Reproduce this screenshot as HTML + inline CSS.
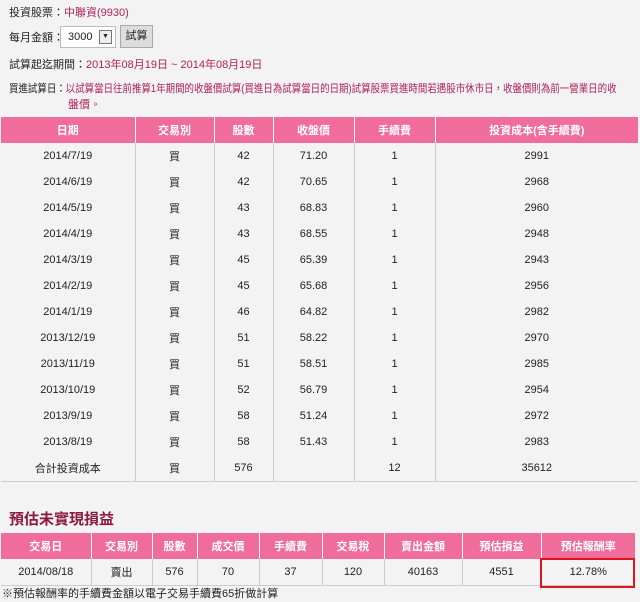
<!DOCTYPE html>
<html><head><meta charset="utf-8"><style>
body{margin:0;width:640px;height:602px;background:#f3f3f3;font-family:"Liberation Sans","Noto Sans CJK TC",sans-serif;font-size:11px;color:#222;position:relative;overflow:hidden}
.l{position:absolute;left:9px;white-space:nowrap}
.r{color:#b0215a}
table{position:absolute;border-collapse:collapse;table-layout:fixed}
td,th{text-align:center;padding:0;border-left:1px solid #ccc;font-size:11px}
th{background:#f06c9a;color:#fff;border-left:1px solid #fff;font-weight:bold}
td:first-child,th:first-child{border-left:none}
#t1{left:1px;top:117px;width:637px}
#t1 th{height:26px}
#t1 td{height:26px}
#t1 tr:last-child td{border-bottom:1px solid #ccc}
#t2{left:1px;top:533px;width:634px}
#t2 th{height:26px}
#t2 td{height:26px;border-bottom:1px solid #ccc}
</style></head><body>
<div class="l" style="top:4px">投資股票：<span class="r">中聯資(9930)</span></div>
<div class="l" style="top:29px">每月金額：</div>
<div style="position:absolute;left:60px;top:26px;width:54px;height:20px;background:#fff;border:1px solid #bbb"><span style="position:absolute;left:7px;top:4px">3000</span><span style="position:absolute;left:38px;top:3px;width:11px;height:12px;border:1px solid #777;background:#eee;font-size:7px;line-height:12px;text-align:center">▼</span></div>
<div style="position:absolute;left:120px;top:25px;width:31px;height:21px;background:#ddd;border:1px solid #aaa;text-align:center;line-height:21px">試算</div>
<div class="l" style="top:56px">試算起迄期間：<span class="r">2013年08月19日 ~ 2014年08月19日</span></div>
<div class="l" style="top:80px;transform:scaleX(0.86);transform-origin:0 0">買進試算日：<span class="r">以試算當日往前推算1年期間的收盤價試算(買進日為試算當日的日期)試算股票買進時間若遇股市休市日，收盤價則為前一營業日的收</span></div>
<div class="l r" style="top:96px;left:68px">盤價。</div>
<table id="t1"><colgroup><col style="width:134px"><col style="width:79px"><col style="width:59px"><col style="width:81px"><col style="width:81px"><col></colgroup>
<tr><th>日期</th><th>交易別</th><th>股數</th><th>收盤價</th><th>手續費</th><th>投資成本(含手續費)</th></tr>
<tr><td>2014/7/19</td><td>買</td><td>42</td><td>71.20</td><td>1</td><td>2991</td></tr>
<tr><td>2014/6/19</td><td>買</td><td>42</td><td>70.65</td><td>1</td><td>2968</td></tr>
<tr><td>2014/5/19</td><td>買</td><td>43</td><td>68.83</td><td>1</td><td>2960</td></tr>
<tr><td>2014/4/19</td><td>買</td><td>43</td><td>68.55</td><td>1</td><td>2948</td></tr>
<tr><td>2014/3/19</td><td>買</td><td>45</td><td>65.39</td><td>1</td><td>2943</td></tr>
<tr><td>2014/2/19</td><td>買</td><td>45</td><td>65.68</td><td>1</td><td>2956</td></tr>
<tr><td>2014/1/19</td><td>買</td><td>46</td><td>64.82</td><td>1</td><td>2982</td></tr>
<tr><td>2013/12/19</td><td>買</td><td>51</td><td>58.22</td><td>1</td><td>2970</td></tr>
<tr><td>2013/11/19</td><td>買</td><td>51</td><td>58.51</td><td>1</td><td>2985</td></tr>
<tr><td>2013/10/19</td><td>買</td><td>52</td><td>56.79</td><td>1</td><td>2954</td></tr>
<tr><td>2013/9/19</td><td>買</td><td>58</td><td>51.24</td><td>1</td><td>2972</td></tr>
<tr><td>2013/8/19</td><td>買</td><td>58</td><td>51.43</td><td>1</td><td>2983</td></tr>
<tr><td>合計投資成本</td><td>買</td><td>576</td><td></td><td>12</td><td>35612</td></tr>
</table>
<div class="l" style="top:508px;font-size:15px;font-weight:bold;color:#8b1a3c">預估未實現損益</div>
<table id="t2"><colgroup><col style="width:90px"><col style="width:61px"><col style="width:45px"><col style="width:62px"><col style="width:63px"><col style="width:62px"><col style="width:78px"><col style="width:79px"><col></colgroup>
<tr><th>交易日</th><th>交易別</th><th>股數</th><th>成交價</th><th>手續費</th><th>交易稅</th><th>賣出金額</th><th>預估損益</th><th>預估報酬率</th></tr>
<tr><td>2014/08/18</td><td>賣出</td><td>576</td><td>70</td><td>37</td><td>120</td><td>40163</td><td>4551</td><td>12.78%</td></tr>
</table>
<div style="position:absolute;left:540px;top:558px;width:91px;height:26px;border:2px solid #e0141e"></div>
<div class="l" style="top:585px;left:2px">※預估報酬率的手續費金額以電子交易手續費65折做計算</div>
</body></html>
